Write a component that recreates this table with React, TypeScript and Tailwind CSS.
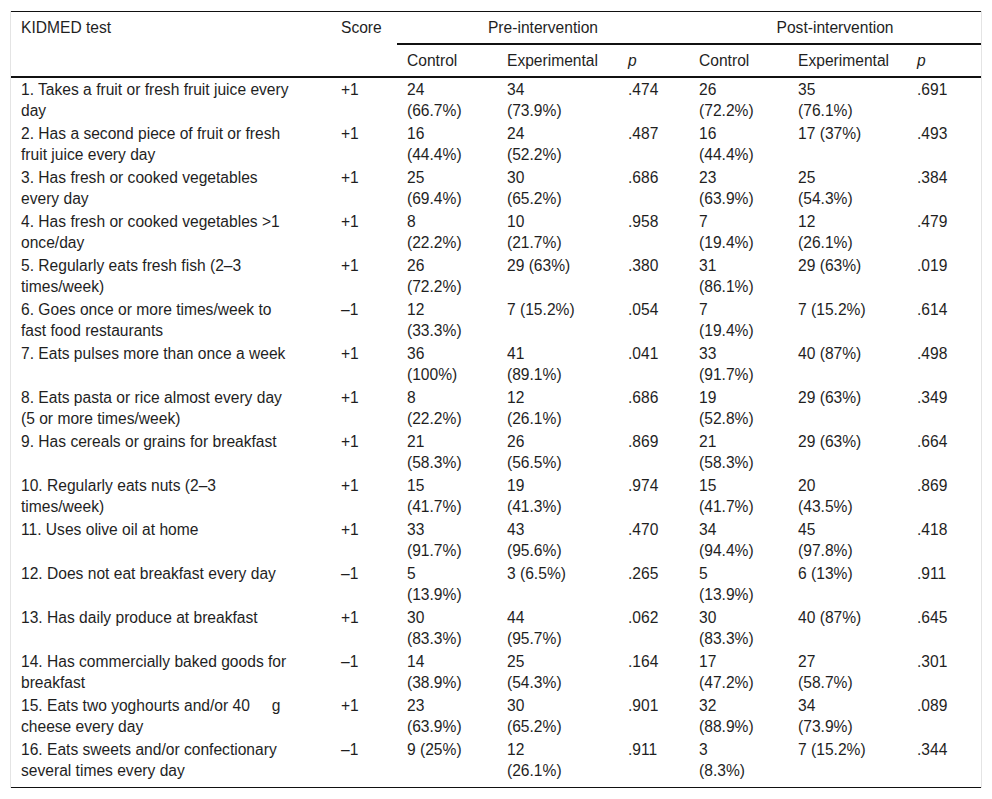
import type { ReactNode } from 'react'

type Row = {
  label: ReactNode
  score: string
  cells: string[]
}

const rows: Row[] = [
  { label: '1. Takes a fruit or fresh fruit juice every\nday', score: '+1', cells: ['24\n(66.7%)', '34\n(73.9%)', '.474', '26\n(72.2%)', '35\n(76.1%)', '.691'] },
  { label: '2. Has a second piece of fruit or fresh\nfruit juice every day', score: '+1', cells: ['16\n(44.4%)', '24\n(52.2%)', '.487', '16\n(44.4%)', '17 (37%)', '.493'] },
  { label: '3. Has fresh or cooked vegetables\nevery day', score: '+1', cells: ['25\n(69.4%)', '30\n(65.2%)', '.686', '23\n(63.9%)', '25\n(54.3%)', '.384'] },
  { label: '4. Has fresh or cooked vegetables >1\nonce/day', score: '+1', cells: ['8\n(22.2%)', '10\n(21.7%)', '.958', '7\n(19.4%)', '12\n(26.1%)', '.479'] },
  { label: '5. Regularly eats fresh fish (2–3\ntimes/week)', score: '+1', cells: ['26\n(72.2%)', '29 (63%)', '.380', '31\n(86.1%)', '29 (63%)', '.019'] },
  { label: '6. Goes once or more times/week to\nfast food restaurants', score: '–1', cells: ['12\n(33.3%)', '7 (15.2%)', '.054', '7\n(19.4%)', '7 (15.2%)', '.614'] },
  { label: '7. Eats pulses more than once a week', score: '+1', cells: ['36\n(100%)', '41\n(89.1%)', '.041', '33\n(91.7%)', '40 (87%)', '.498'] },
  { label: '8. Eats pasta or rice almost every day\n(5 or more times/week)', score: '+1', cells: ['8\n(22.2%)', '12\n(26.1%)', '.686', '19\n(52.8%)', '29 (63%)', '.349'] },
  { label: '9. Has cereals or grains for breakfast', score: '+1', cells: ['21\n(58.3%)', '26\n(56.5%)', '.869', '21\n(58.3%)', '29 (63%)', '.664'] },
  { label: '10. Regularly eats nuts (2–3\ntimes/week)', score: '+1', cells: ['15\n(41.7%)', '19\n(41.3%)', '.974', '15\n(41.7%)', '20\n(43.5%)', '.869'] },
  { label: '11. Uses olive oil at home', score: '+1', cells: ['33\n(91.7%)', '43\n(95.6%)', '.470', '34\n(94.4%)', '45\n(97.8%)', '.418'] },
  { label: '12. Does not eat breakfast every day', score: '–1', cells: ['5\n(13.9%)', '3 (6.5%)', '.265', '5\n(13.9%)', '6 (13%)', '.911'] },
  { label: '13. Has daily produce at breakfast', score: '+1', cells: ['30\n(83.3%)', '44\n(95.7%)', '.062', '30\n(83.3%)', '40 (87%)', '.645'] },
  { label: '14. Has commercially baked goods for\nbreakfast', score: '–1', cells: ['14\n(38.9%)', '25\n(54.3%)', '.164', '17\n(47.2%)', '27\n(58.7%)', '.301'] },
  {
    label: (
      <>
        15. Eats two yoghourts and/or 40<span className="inline-block w-[22px]" />g{'\n'}cheese every day
      </>
    ),
    score: '+1',
    cells: ['23\n(63.9%)', '30\n(65.2%)', '.901', '32\n(88.9%)', '34\n(73.9%)', '.089'],
  },
  { label: '16. Eats sweets and/or confectionary\nseveral times every day', score: '–1', cells: ['9 (25%)', '12\n(26.1%)', '.911', '3\n(8.3%)', '7 (15.2%)', '.344'] },
]

export default function App() {
  return (
    <div className="min-h-screen bg-white pt-[11px] pl-[10px] font-['Liberation_Sans',Arial,sans-serif] text-[15.6px] leading-[21px] text-[#1f1f1f]">
      <div className="w-[972px] border-x border-[#e4e4e4]">
        <table className="w-full table-fixed border-separate border-spacing-0 border-y border-[#111] text-left">
          <colgroup>
            <col className="w-[320px]" />
            <col className="w-[66px]" />
            <col className="w-[100px]" />
            <col className="w-[121px]" />
            <col className="w-[71px]" />
            <col className="w-[99px]" />
            <col className="w-[119px]" />
            <col className="w-[74px]" />
          </colgroup>
          <thead>
            <tr>
              <th rowSpan={2} className="border-b-2 border-[#111] py-[5px] pl-[10px] align-top font-normal">
                KIDMED test
              </th>
              <th rowSpan={2} className="border-b-2 border-[#111] py-[5px] pl-[10px] align-top font-normal">
                Score
              </th>
              <th colSpan={3} className="border-b-2 border-[#111] py-[5px] text-center font-normal">
                Pre-intervention
              </th>
              <th colSpan={3} className="border-b-2 border-[#111] py-[5px] text-center font-normal">
                Post-intervention
              </th>
            </tr>
            <tr>
              <th className="border-b-2 border-[#111] py-[5px] pl-[10px] font-normal">Control</th>
              <th className="border-b-2 border-[#111] py-[5px] pl-[10px] font-normal">Experimental</th>
              <th className="border-b-2 border-[#111] py-[5px] pl-[10px] font-normal italic">p</th>
              <th className="border-b-2 border-[#111] py-[5px] pl-[10px] font-normal">Control</th>
              <th className="border-b-2 border-[#111] py-[5px] pl-[10px] font-normal">Experimental</th>
              <th className="border-b-2 border-[#111] py-[5px] pl-[10px] font-normal italic">p</th>
            </tr>
          </thead>
          <tbody>
            {rows.map((row, i) => {
              const last = i === rows.length - 1
              const cell = last
                ? 'pt-px pb-[6px] pl-[10px] align-top whitespace-pre'
                : 'py-px pl-[10px] align-top whitespace-pre'
              return (
                <tr key={i}>
                  <td className={cell}>{row.label}</td>
                  <td className={cell}>{row.score}</td>
                  {row.cells.map((c, j) => (
                    <td key={j} className={cell}>
                      {c}
                    </td>
                  ))}
                </tr>
              )
            })}
          </tbody>
        </table>
      </div>
    </div>
  )
}
